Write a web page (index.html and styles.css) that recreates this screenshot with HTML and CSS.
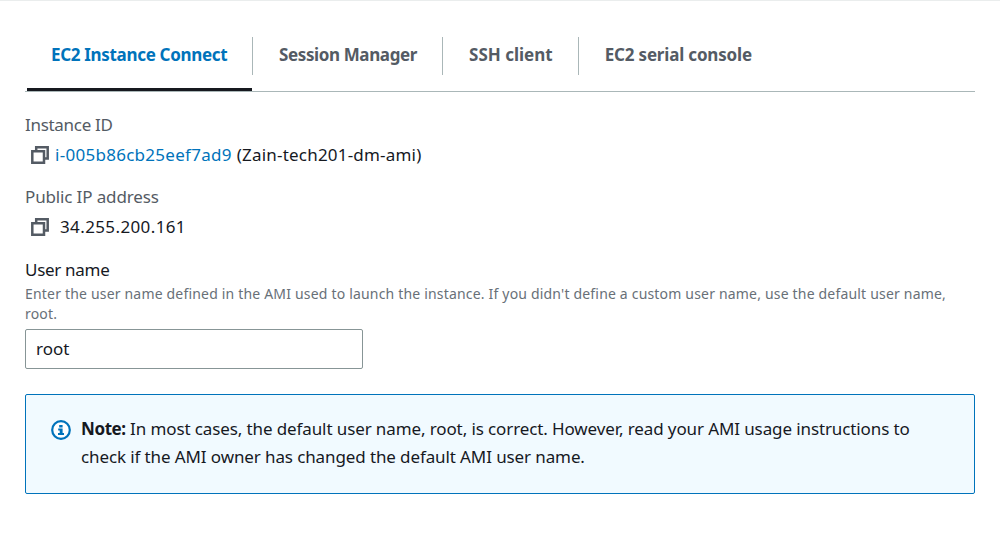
FILE: index.html
```html
<!DOCTYPE html>
<html lang="en">
<head>
<meta charset="utf-8">
<title>Connect to instance</title>
<link rel="stylesheet" href="styles.css">
</head>
<body>
<main class="panel">
  <nav class="tabs">
    <a class="tab tab-active"><span class="tab-label label-connect">EC2 Instance Connect</span></a>
    <a class="tab"><span class="tab-label label-session">Session Manager</span></a>
    <a class="tab"><span class="tab-label label-ssh">SSH client</span></a>
    <a class="tab"><span class="tab-label label-serial">EC2 serial console</span></a>
  </nav>
  <section class="field">
    <div class="key"><span class="key-instance">Instance ID</span></div>
    <div class="value">
      <svg class="copy" viewBox="0 0 18 18"><path d="M5.2 5V1.3h11.5v11.2H13M1.3 5.2H13v11.5H1.3z"/></svg>
      <a class="link">i-005b86cb25eef7ad9</a><span class="instance-name">(Zain-tech201-dm-ami)</span>
    </div>
  </section>
  <section class="field">
    <div class="key"><span class="key-ip">Public IP address</span></div>
    <div class="value">
      <svg class="copy" viewBox="0 0 18 18"><path d="M5.2 5V1.3h11.5v11.2H13M1.3 5.2H13v11.5H1.3z"/></svg>
      <span class="ip">34.255.200.161</span>
    </div>
  </section>
  <section class="form">
    <label class="form-label" for="user">User name</label>
    <p class="hint">Enter the user name defined in the AMI used to launch the instance. If you didn't define a custom user name, use the default user name,<br>root.</p>
    <input class="input" id="user" type="text" value="root">
  </section>
  <aside class="note">
    <svg class="info" viewBox="0 0 20 20"><circle cx="10" cy="10" r="8.8"/><path d="M8.2 5h3.4v2.4H8.2zM7.2 8.5h4.4v4.6H13V15H7v-1.9h1.7v-2.7H7.2z"/></svg>
    <p class="note-text"><strong>Note:</strong> In most cases, the default user name, root, is correct. However, read your AMI usage instructions to<br>check if the AMI owner has changed the default AMI user name.</p>
  </aside>
</main>
</body>
</html>
```
FILE: styles.css
```css
* { box-sizing: border-box; }
body {
  margin: 0;
  background: #fff;
  color: #16191f;
  font: 17px/24px "Noto Sans", "Open Sans", sans-serif;
}
.panel {
  height: 537px;
  border-top: 1px solid #eaeded;
  padding: 36px 25px 0;
}
.tabs {
  display: flex;
  height: 55px;
  border-bottom: 1px solid #aab7b8;
  padding-left: 2px;
}
.tab {
  display: flex;
  height: 38px;
  padding: 6px 25px 0 26px;
  color: #545b64;
  font-weight: 700;
  white-space: nowrap;
}
.tab + .tab { border-left: 1px solid #aab7b8; }
.tab-active {
  width: 225px;
  height: 54px;
  padding-left: 24px;
  padding-right: 0;
  border-bottom: 3px solid #16191f;
  color: #0073bb;
}
.label-connect { letter-spacing: -0.32px; }
.label-session { letter-spacing: -0.38px; }
.label-ssh { letter-spacing: 0; }
.label-serial { letter-spacing: -0.18px; }
.field { height: 72px; padding-top: 21px; white-space: nowrap; }
.key { color: #545b64; letter-spacing: -0.3px; }
.key-ip { letter-spacing: -0.14px; }
.value {
  display: flex;
  align-items: center;
  height: 24px;
  margin-top: 6px;
  padding-left: 6px;
}
.copy {
  width: 18px;
  height: 18px;
  margin-right: 6px;
  fill: none;
  stroke: #545b64;
  stroke-width: 2.5;
}
.link { color: #0073bb; letter-spacing: 0.28px; }
.instance-name { margin-left: 5px; letter-spacing: 0.2px; }
.ip { margin-left: 5px; letter-spacing: 0.38px; }
.form { padding-top: 22px; }
.form-label { display: block; letter-spacing: -0.3px; }
.hint {
  margin: 2px 0 5px;
  color: #687078;
  font-size: 14px;
  line-height: 20px;
  letter-spacing: 0.185px;
  white-space: nowrap;
}
.input {
  display: block;
  width: 338px;
  height: 40px;
  padding: 0 10px 2px;
  border: 1px solid #879596;
  border-radius: 2px;
  background: #fff;
  color: #16191f;
  font: inherit;
  letter-spacing: 0;
}
.note {
  display: flex;
  height: 100px;
  margin-top: 25px;
  padding: 20px 25px;
  border: 1px solid #0073bb;
  border-radius: 2px;
  background: #f1faff;
}
.info { width: 20px; height: 20px; margin: 5px 10px 0 0; fill: #0073bb; }
.info circle { fill: #fff; stroke: #0073bb; stroke-width: 2.2; }
.note-text {
  margin: 0;
  line-height: 28px;
  letter-spacing: -0.11px;
  white-space: nowrap;
}
.note-text strong { letter-spacing: -0.4px; }
```
